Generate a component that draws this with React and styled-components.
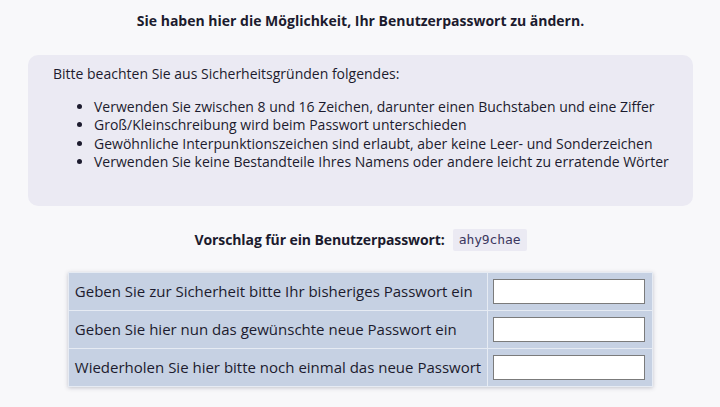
import React from 'react';
import styled, { createGlobalStyle } from 'styled-components';

const GlobalStyle = createGlobalStyle`
  html, body { margin: 0; padding: 0; background: #f8f8fa; }
  body { font-family: 'Open Sans', 'Liberation Sans', sans-serif; color: #1c1b2e; font-size: 14px; }
`;

const Page = styled.main`
  padding: 8px 27px 20px 28px;
  display: flex;
  flex-direction: column;
  align-items: center;
`;

const Heading = styled.h1`
  font-size: 14px;
  font-weight: 700;
  margin: 0;
  line-height: 25px;
  text-align: center;
`;

const Notice = styled.section`
  align-self: stretch;
  margin-top: 22px;
  background: #ebeaf3;
  border-radius: 10px;
  padding: 10px 15px 34px 25px;
  line-height: 18.5px;
`;

const Intro = styled.p`
  margin: 0;
`;

const Rules = styled.ul`
  margin: 14px 0 0;
  padding-left: 41px;
  list-style: disc;
  white-space: nowrap;
`;

const Suggestion = styled.p`
  margin: 23px 0 0;
  font-weight: 700;
  line-height: 22px;
  display: flex;
  align-items: center;
  gap: 8px;
  letter-spacing: -0.1px;
`;

const Code = styled.code`
  font-family: 'DejaVu Sans Mono', monospace;
  font-weight: 400;
  font-size: 13px;
  line-height: 16px;
  background: #ebeaf3;
  color: #3b3760;
  padding: 3px 6px;
  border-radius: 2px;
`;

const FormTable = styled.table`
  margin-top: 21px;
  width: 585px;
  border-collapse: separate;
  border-spacing: 1px;
  background: #e6ebf3;
  box-shadow: 0 1px 4px rgba(40, 45, 70, 0.25);
`;

const Label = styled.td`
  background: #c6d1e3;
  padding: 0 6px;
  height: 37px;
  font-size: 15px;
  color: #1c1b2e;
  white-space: nowrap;
`;

const InputCell = styled.td`
  background: #c6d1e3;
  padding: 0 7px 0 5px;
  width: 152px;
`;

const Field = styled.input`
  display: block;
  box-sizing: border-box;
  width: 152px;
  height: 25px;
  border: 1px solid #7b7b7b;
  background: #fff;
  padding: 2px 4px;
  font-family: inherit;
  font-size: 14px;
`;

const rules = [
  'Verwenden Sie zwischen 8 und 16 Zeichen, darunter einen Buchstaben und eine Ziffer',
  'Groß/Kleinschreibung wird beim Passwort unterschieden',
  'Gewöhnliche Interpunktionszeichen sind erlaubt, aber keine Leer- und Sonderzeichen',
  'Verwenden Sie keine Bestandteile Ihres Namens oder andere leicht zu erratende Wörter',
];

const fields = [
  'Geben Sie zur Sicherheit bitte Ihr bisheriges Passwort ein',
  'Geben Sie hier nun das gewünschte neue Passwort ein',
  'Wiederholen Sie hier bitte noch einmal das neue Passwort',
];

export default function App() {
  return (
    <>
      <GlobalStyle />
      <Page>
        <Heading>Sie haben hier die Möglichkeit, Ihr Benutzerpasswort zu ändern.</Heading>
        <Notice>
          <Intro>Bitte beachten Sie aus Sicherheitsgründen folgendes:</Intro>
          <Rules>
            {rules.map((r) => <li key={r}>{r}</li>)}
          </Rules>
        </Notice>
        <Suggestion>
          Vorschlag für ein Benutzerpasswort: <Code>ahy9chae</Code>
        </Suggestion>
        <FormTable>
          <tbody>
            {fields.map((f) => (
              <tr key={f}>
                <Label>{f}</Label>
                <InputCell><Field type="password" /></InputCell>
              </tr>
            ))}
          </tbody>
        </FormTable>
      </Page>
    </>
  );
}
